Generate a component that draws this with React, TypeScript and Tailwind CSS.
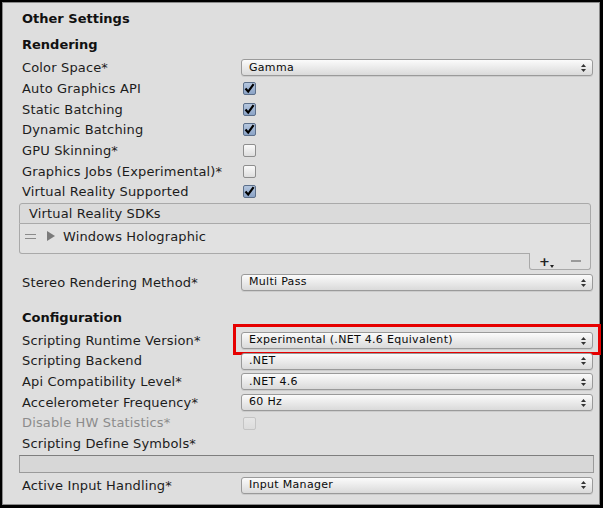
import React from "react";

type Row =
  | { kind: "dropdown"; label: string; value: string; highlight?: boolean }
  | { kind: "check"; label: string; checked: boolean; disabled?: boolean }
  | { kind: "label"; label: string };

const RENDERING_ROWS: Row[] = [
  { kind: "dropdown", label: "Color Space*", value: "Gamma" },
  { kind: "check", label: "Auto Graphics API", checked: true },
  { kind: "check", label: "Static Batching", checked: true },
  { kind: "check", label: "Dynamic Batching", checked: true },
  { kind: "check", label: "GPU Skinning*", checked: false },
  { kind: "check", label: "Graphics Jobs (Experimental)*", checked: false },
  { kind: "check", label: "Virtual Reality Supported", checked: true },
];

const CONFIG_ROWS: Row[] = [
  {
    kind: "dropdown",
    label: "Scripting Runtime Version*",
    value: "Experimental (.NET 4.6 Equivalent)",
    highlight: true,
  },
  { kind: "dropdown", label: "Scripting Backend", value: ".NET" },
  { kind: "dropdown", label: "Api Compatibility Level*", value: ".NET 4.6" },
  { kind: "dropdown", label: "Accelerometer Frequency*", value: "60 Hz" },
  { kind: "check", label: "Disable HW Statistics*", checked: false, disabled: true },
  { kind: "label", label: "Scripting Define Symbols*" },
];

function Arrows() {
  return (
    <svg width="5" height="8" viewBox="0 0 5 8" className="shrink-0">
      <path d="M2.5 0 L5 3 L0 3 Z" fill="#333" />
      <path d="M2.5 8 L5 5 L0 5 Z" fill="#333" />
    </svg>
  );
}

function Dropdown({ value }: { value: string }) {
  return (
    <div className="w-[352px] h-[17px] flex items-center justify-between pl-[7px] pr-[6px] rounded-[3px] border border-[#9a9a9a] bg-gradient-to-b from-[#fbfbfb] to-[#dadada] text-[11px] text-[#0a0a0a] shadow-[0_1px_0_rgba(0,0,0,0.08)]">
      <span className="tracking-[0.3px]">{value}</span>
      <Arrows />
    </div>
  );
}

function Checkbox({ checked, disabled }: { checked: boolean; disabled?: boolean }) {
  if (checked) {
    return (
      <div className="ml-[2px] w-[13px] h-[13px] rounded-[2px] border border-[#5c6f8a] bg-gradient-to-b from-[#b4c6de] to-[#8ba3c6] flex items-center justify-center">
        <svg width="11" height="11" viewBox="0 0 11 11">
          <path d="M1.5 5.5 L4.2 8.6 L9.6 1.2" fill="none" stroke="#000" strokeWidth="2.2" />
        </svg>
      </div>
    );
  }
  return (
    <div
      className={`ml-[2px] w-[13px] h-[13px] rounded-[2px] border bg-gradient-to-b ${
        disabled
          ? "border-[#c4c4c4] from-[#e6e6e6] to-[#dcdcdc]"
          : "border-[#8e8e8e] from-[#fafafa] to-[#dedede]"
      }`}
    />
  );
}

function SettingRow({ row }: { row: Row }) {
  const disabled = row.kind === "check" && row.disabled;
  return (
    <div className="relative h-[20.67px] flex items-center pl-[19px]">
      <div
        className={`w-[219px] shrink-0 text-[13px] tracking-[0.15px] ${disabled ? "text-[#8c8c8c]" : "text-[#1c1c1c]"}`}
      >
        {row.label}
      </div>
      {row.kind === "dropdown" && <Dropdown value={row.value} />}
      {row.kind === "check" && <Checkbox checked={row.checked} disabled={row.disabled} />}
      {row.kind === "dropdown" && row.highlight && (
        <div className="absolute left-[230px] top-[-6px] w-[368px] h-[31px] border-[3px] border-[#e60000]" />
      )}
    </div>
  );
}

function SectionTitle({ children }: { children: React.ReactNode }) {
  return (
    <div className="h-[20px] flex items-center pl-[19px] text-[13px] font-bold text-[#111]">
      {children}
    </div>
  );
}

export default function App() {
  return (
    <div
      className="w-[603px] h-[508px] border-2 border-r-[3px] border-b-[3px] border-black bg-[#dedede] flex"
      style={{ fontFamily: '"DejaVu Sans", Verdana, sans-serif' }}
    >
      <div className="flex-1 border border-[#8a8a8a] flex flex-col pt-[6px] overflow-visible">
        <SectionTitle>Other Settings</SectionTitle>
        <div className="h-[6px]" />
        <SectionTitle>Rendering</SectionTitle>
        <div className="h-[2.67px]" />
        {RENDERING_ROWS.map((row) => (
          <SettingRow key={row.label} row={row} />
        ))}

        {/* Virtual Reality SDKs list */}
        <div className="ml-[16px] mt-[1px] w-[572px] flex flex-col">
          <div className="h-[21px] flex items-center pl-[9px] rounded-t-[3px] border border-[#a9a9a9] bg-[#dadada] text-[13px] tracking-[0.15px] text-[#1c1c1c]">
            Virtual Reality SDKs
          </div>
          <div className="h-[30px] flex items-center pl-[5px] pb-[5px] border border-t-0 border-[#a9a9a9] rounded-b-[3px] rounded-br-none bg-[#e1e1e1] text-[13px] tracking-[0.15px] text-[#1c1c1c]">
            <div className="w-[11px] flex flex-col gap-[3px]">
              <div className="h-px bg-[#8a8a8a]" />
              <div className="h-px bg-[#8a8a8a]" />
            </div>
            <svg width="8" height="10" viewBox="0 0 8 10" className="ml-[11px]">
              <path d="M0 0 L8 5 L0 10 Z" fill="#7a7a7a" />
            </svg>
            <span className="ml-[8px]">Windows Holographic</span>
          </div>
          <div className="flex justify-end">
            <div className="w-[62px] h-[17px] -mt-px flex items-center justify-center gap-[21px] border border-t-0 border-[#a9a9a9] rounded-b-[3px] bg-[#e1e1e1]">
              <span className="relative text-[13px] font-bold leading-none text-[#222]">
                +
                <svg width="4" height="3" viewBox="0 0 4 3" className="absolute -right-[4px] bottom-[0px]">
                  <path d="M0 0 L4 0 L2 3 Z" fill="#222" />
                </svg>
              </span>
              <span className="w-[10px] h-[2px] bg-[#9a9a9a]" />
            </div>
          </div>
        </div>

        <div className="h-[2px]" />
        <SettingRow row={{ kind: "dropdown", label: "Stereo Rendering Method*", value: "Multi Pass" }} />
        <div className="h-[14.67px]" />
        <SectionTitle>Configuration</SectionTitle>
        <div className="h-[2.67px]" />
        {CONFIG_ROWS.map((row) => (
          <SettingRow key={row.label} row={row} />
        ))}
        <div className="ml-[16px] mr-[5px] mt-[1px] h-[18px] border border-[#9a9a9a] border-t-[#7e7e7e] bg-[#d7d7d7]" />
        <div className="h-[2px]" />
        <SettingRow row={{ kind: "dropdown", label: "Active Input Handling*", value: "Input Manager" }} />
      </div>
    </div>
  );
}
